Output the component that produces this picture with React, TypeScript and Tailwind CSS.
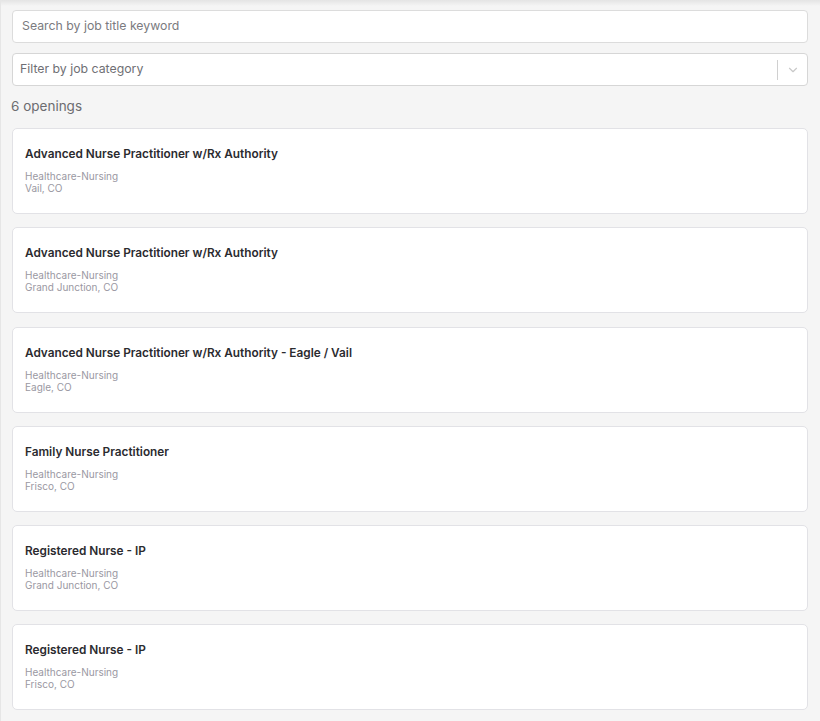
import { ChevronDown } from "lucide-react"

const jobs = [
  { title: "Advanced Nurse Practitioner w/Rx Authority", category: "Healthcare-Nursing", location: "Vail, CO" },
  { title: "Advanced Nurse Practitioner w/Rx Authority", category: "Healthcare-Nursing", location: "Grand Junction, CO" },
  { title: "Advanced Nurse Practitioner w/Rx Authority - Eagle / Vail", category: "Healthcare-Nursing", location: "Eagle, CO" },
  { title: "Family Nurse Practitioner", category: "Healthcare-Nursing", location: "Frisco, CO" },
  { title: "Registered Nurse - IP", category: "Healthcare-Nursing", location: "Grand Junction, CO" },
  { title: "Registered Nurse - IP", category: "Healthcare-Nursing", location: "Frisco, CO" },
]

const JobCard = ({ job }: any) => {
  return (
    <div className="bg-white border border-[#e2e2e6] rounded-[5px] h-[86px] px-[12px] pt-[17px]">
      <div className="text-[11.8px] font-semibold text-[#2b2b2f] leading-[16px]">{job.title}</div>
      <div className="mt-[8px] text-[10px] text-[#9a98a2] leading-[12px]">
        <div>{job.category}</div>
        <div>{job.location}</div>
      </div>
    </div>
  )
}

export default function App() {
  return (
    <div
      className="min-h-[721px] w-[820px] bg-[#f5f5f5] border-l border-[#e6e6e6] relative"
      style={{ fontFamily: "Inter, 'Open Sans', Arial, sans-serif" }}
    >
      <div className="absolute top-0 left-0 right-0 h-[6px] bg-gradient-to-b from-[#e4e4e4] to-transparent" />
      <div className="pl-[11px] pr-[12px] pt-[10px] pb-[10px]">
        <div className="bg-white border border-[#dcdcdc] rounded-[4px] h-[33px] flex items-center px-[9px]">
          <span className="text-[12.3px] text-[#7b7b80]">Search by job title keyword</span>
        </div>

        <div className="mt-[10px] bg-white border border-[#d6d6d6] rounded-[4px] h-[33px] flex items-center">
          <span className="flex-1 pl-[7px] text-[12.3px] text-[#6f6f74]">Filter by job category</span>
          <div className="w-px h-[20px] bg-[#d0d0d0]" />
          <div className="w-[29px] flex justify-center">
            <ChevronDown className="w-[14px] h-[14px] text-[#c9c9c9]" strokeWidth={2} />
          </div>
        </div>

        <div className="mt-[10px] text-[13.5px] text-[#6c6c70] leading-[20px] -ml-px">6 openings</div>

        <div className="mt-[12px] flex flex-col gap-[13.3px]">
          {jobs.map((job, i) => (
            <JobCard key={i} job={job} />
          ))}
        </div>
      </div>
    </div>
  )
}
